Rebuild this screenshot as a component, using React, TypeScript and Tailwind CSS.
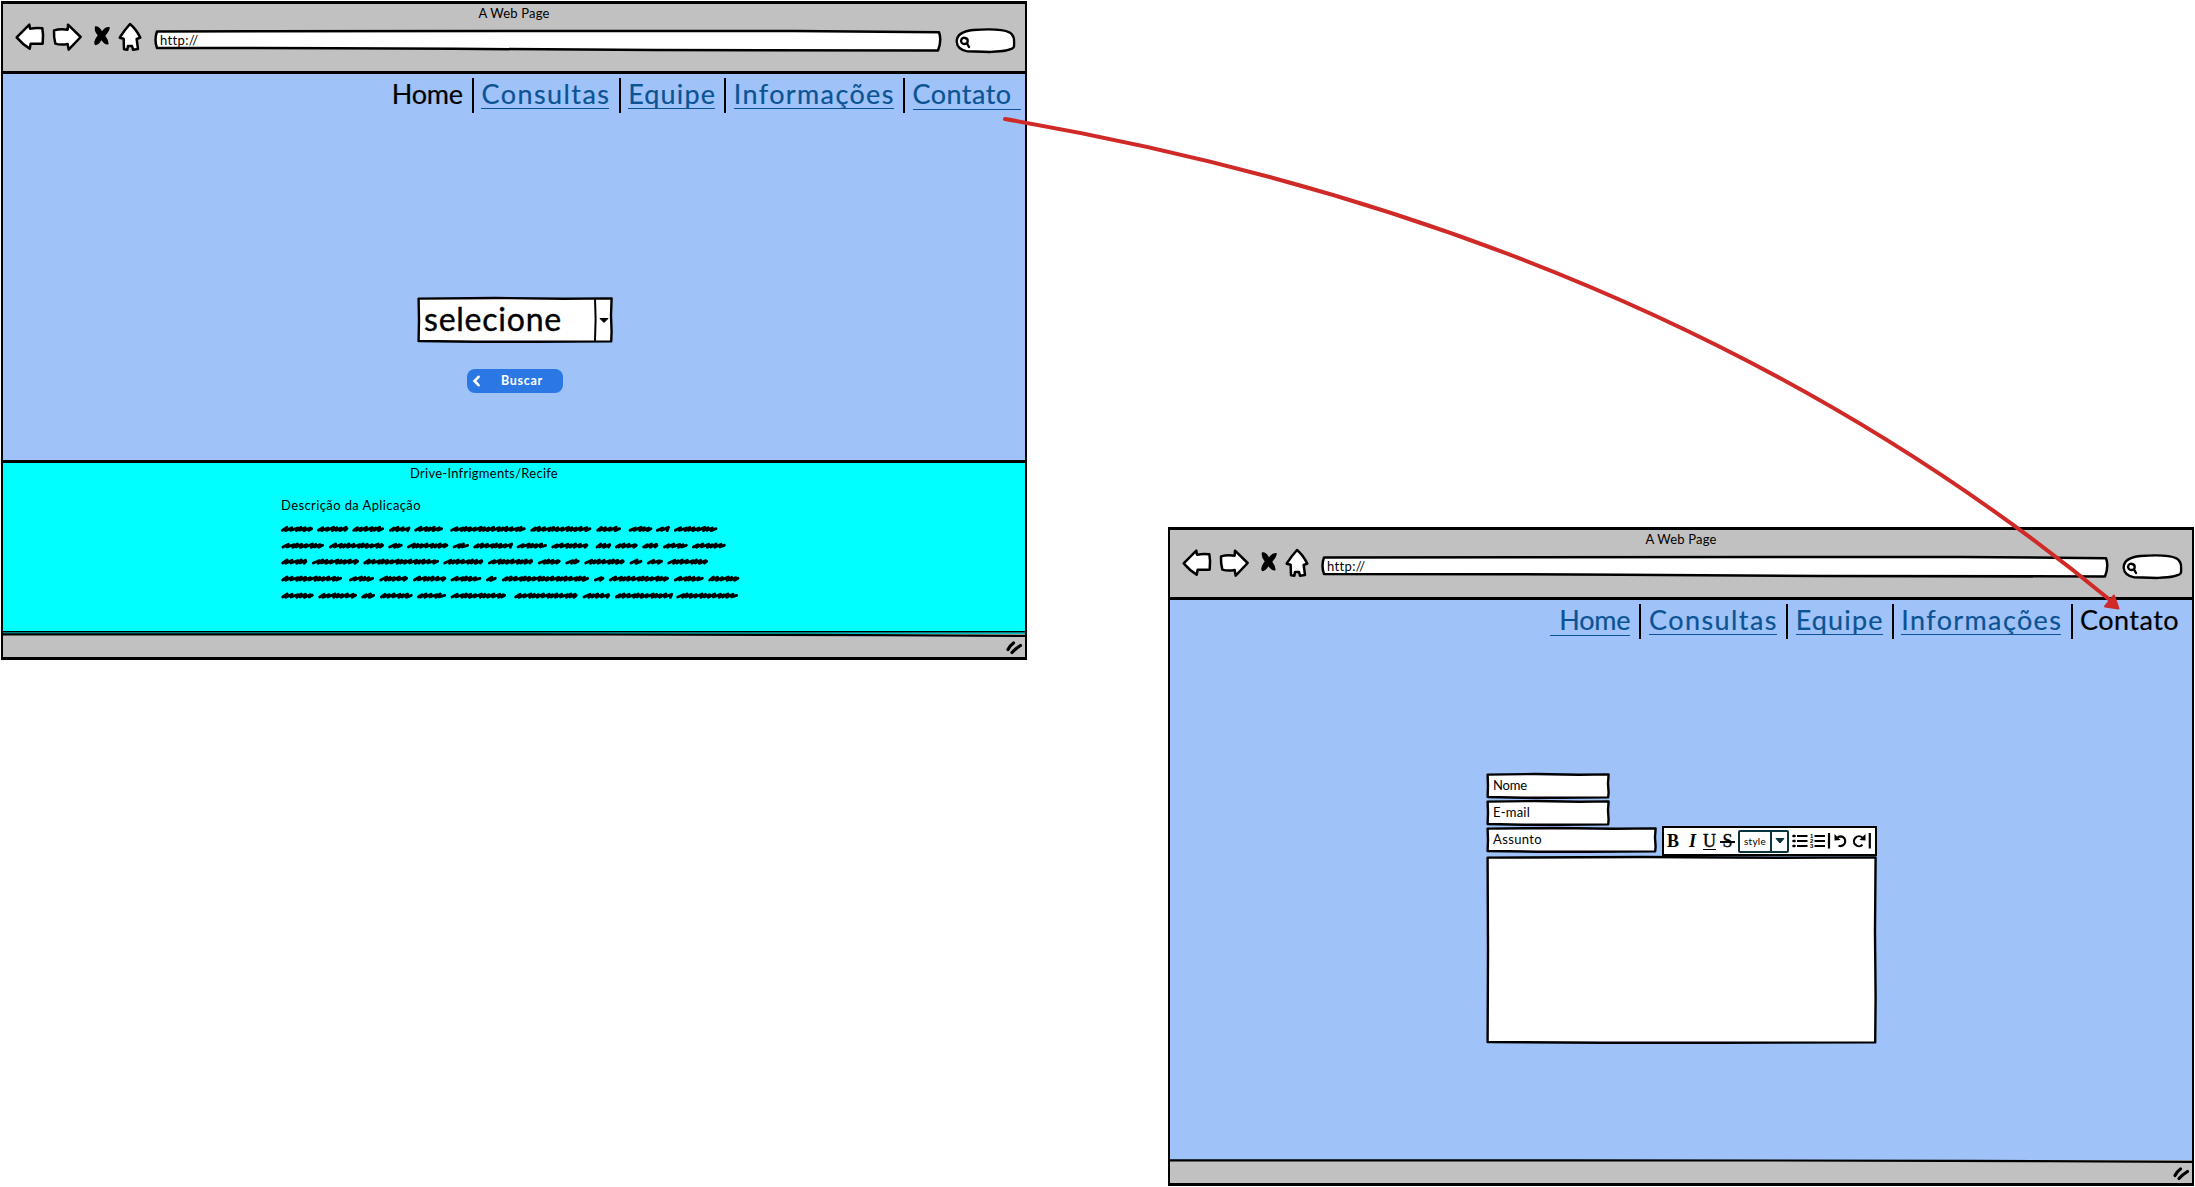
import React, { useLayoutEffect, useRef, useState } from "react";

/** Text whose letter spacing is tuned so that it takes a given width. */
function FitText({ w, className = "", children }: { w: number; className?: string; children: string }) {
  const ref = useRef<HTMLSpanElement>(null);
  const [spacing, setSpacing] = useState(0);
  useLayoutEffect(() => {
    if (ref.current) {
      const natural = ref.current.getBoundingClientRect().width;
      setSpacing((w - natural) / children.length);
    }
  }, []);
  return (
    <span ref={ref} className={`inline-block whitespace-pre ${className}`} style={{ letterSpacing: spacing }}>
      {children}
    </span>
  );
}

/** A box with a hand-drawn outline, stretched behind its content. */
function SketchBox({
  w,
  h,
  className = "",
  stroke = 2.4,
  children,
}: {
  w: number;
  h: number;
  className?: string;
  stroke?: number;
  children?: React.ReactNode;
}) {
  const d = `M1.6 1.6 L${w * 0.4} 1 L${w * 0.75} 1.8 L${w - 1.4} 1.4 L${w - 2} ${h * 0.4} L${w - 1.4} ${h * 0.75} L${w - 1.8} ${h - 1.6} L${w * 0.6} ${h - 1.2} L${w * 0.3} ${h - 1.3} L1.6 ${h - 2} L2 ${h * 0.5} Z`;
  return (
    <div className={`relative isolate shrink-0 ${className}`} style={{ width: w, height: h }}>
      <svg className="absolute inset-0 -z-10 overflow-visible" width={w} height={h}>
        <path d={d} fill="#fff" stroke="#000" strokeWidth={stroke} strokeLinejoin="round" />
      </svg>
      {children}
    </div>
  );
}

function BrowserBar() {
  return (
    <header className="h-[70px] shrink-0 border-b-[3px] border-black bg-[#c1c1c1]">
      <div className="flex h-[17px] justify-center text-[13px] leading-[18px]">
        <FitText w={71}>A Web Page</FitText>
      </div>
      <div className="flex items-start pl-[13px]">
        <svg className="mt-[2px] overflow-visible" width="28" height="27" viewBox="48 69 84 81">
          <path d="M50 112L88 74L90 86Q110 82 127 85Q131 105 128 131L92 131L89 146Q68 133 50 112Z" fill="#fff" stroke="#000" strokeWidth="7.500" strokeLinejoin="round" />
        </svg>
        <svg className="mt-[2px] ml-[9px] overflow-visible" width="28" height="28" viewBox="159 69 84 84">
          <path d="M162 91Q180 86 203 89L204 74L242 111L206 149L203 132Q183 136 166 131Q161 112 162 91Z" fill="#fff" stroke="#000" strokeWidth="7.500" strokeLinejoin="round" />
        </svg>
        <svg className="mt-[4px] ml-[12px] overflow-visible" width="17" height="21" viewBox="279 75 51 63">
          <path d="M285 79Q297 77 306 94Q315 79 329 81Q331 90 316 107Q326 120 326 132Q317 138 304 121Q297 134 286 136Q277 129 293 106Q281 92 285 79Z" fill="#000" />
        </svg>
        <svg className="mt-[2px] ml-[8px] overflow-visible" width="24" height="28" viewBox="354 69 72 84">
          <path d="M390 72Q408 87 421 113L410 117L414 147L399 149L396 138L384 138L382 149L372 148L371 116L359 113Q372 92 390 72Z" fill="#fff" stroke="#000" strokeWidth="7.500" strokeLinejoin="round" />
        </svg>
        <div className="relative isolate mt-[9px] ml-[12px] h-[21px] w-[788px] pl-[6px] text-[13px] leading-[21px]">
          <svg className="absolute inset-0 -z-10 overflow-visible" width="788" height="21">
            <path d="M3 1.4L500 1L640 1L785 2.2Q788 10 784 20.5L500 20L300 18.8L180 18.2L3 18Q0 10 3 1.4Z" fill="#fff" stroke="#000" strokeWidth="2.5" strokeLinejoin="round" />
          </svg>
          <FitText w={38}>http://</FitText>
        </div>
        <svg className="mt-[7px] ml-[13px] overflow-visible" width="61" height="25" viewBox="225 84 183 75">
          <path d="M230 125C230 101 250 93 280 90C325 87 370 88 388 97C404 106 403 120 402 140C398 152 360 154 330 156C300 154 280 155 262 154C240 150 231 140 230 125Z" fill="#fff" stroke="#000" strokeWidth="7" />
          <path d="M257 114C246 110 240 121 245 128C251 135 263 132 263 124C264 117 261 115 255 114M261 130L267 141" fill="none" stroke="#000" strokeWidth="7" strokeLinecap="round" />
        </svg>
      </div>
    </header>
  );
}

const LINKS = [
  { label: "Home", box: "w-[71px]", fit: 71 },
  { label: "Consultas", box: "w-[128px]", fit: 129 },
  { label: "Equipe", box: "w-[87px]", fit: 88 },
  { label: "Informações", box: "w-[160px]", fit: 161 },
  { label: "Contato", box: "w-[98px]", fit: 99 },
];

function Nav({ active, className }: { active: string; className: string }) {
  return (
    <nav className={`mt-[4px] flex h-[35px] shrink-0 justify-end text-[27px] leading-[32px] ${className}`}>
      {LINKS.map(({ label, box, fit }, i) => {
        const current = label === active;
        const pad = current ? "" : label === "Home" ? "pl-[9px] box-content" : label === "Contato" ? "pr-[10px] box-content" : "";
        return (
          <React.Fragment key={label}>
            {i > 0 && <span className="mr-[7.5px] ml-[9.2px] h-[35px] w-[2px] bg-black" />}
            <a
              className={`h-[31px] ${box} ${pad} ${
                current
                  ? "text-black [-webkit-text-stroke:0.2px_black]"
                  : "border-b border-[#0b5394] text-[#0b5394] [-webkit-text-stroke:0.2px_#0b5394]"
              }`}
            >
              <FitText w={fit}>{label}</FitText>
            </a>
          </React.Fragment>
        );
      })}
    </nav>
  );
}

function StatusBar({ double }: { double: boolean }) {
  return (
    <footer className="relative h-[23px] shrink-0 bg-[#c1c1c1]">
      <svg className="absolute left-0 top-0 overflow-visible" width="1022" height="4">
        {double && <path d="M0 -2.300H1022" stroke="#000" strokeWidth="1.600" />}
        {double && <path d="M0 -1H1022" stroke="#007a7a" strokeWidth="1.200" />}
        <path d="M0 -0.800L400 -0.800L800 -0.200L1022 0.800L1022 3L880 2.200L600 1.500L0 1.500Z" fill="#000" />
      </svg>
      <svg className="mr-[3px] ml-auto overflow-visible" width="18" height="22" viewBox="0 0 18 22">
        <path d="M4 15.500Q6 11.500 9.500 9M8 18.500Q11 15 16.500 11.500" fill="none" stroke="#000" strokeWidth="3.200" strokeLinecap="round" />
      </svg>
    </footer>
  );
}

function BrowserWindow({ className, double = false, children }: { className: string; double?: boolean; children: React.ReactNode }) {
  return (
    <section className={`absolute flex h-[659px] w-[1026px] flex-col border-x-2 border-y-[3px] border-black bg-[#9fc3f8] ${className}`}>
      <BrowserBar />
      <main className="flex min-h-0 flex-1 flex-col">{children}</main>
      <StatusBar double={double} />
    </section>
  );
}

/* Start and end of every scribbled word, line by line, in thirds of a pixel. */
const SCRIBBLES: { y: number; words: number[][] }[] = [
  { y: 238, words: [[65, 160], [173, 266], [279, 373], [389, 450], [465, 550], [573, 798], [813, 995], [1011, 1084], [1108, 1178], [1190, 1229], [1244, 1373]] },
  { y: 288, words: [[67, 193], [209, 373], [387, 429], [443, 566], [580, 628], [642, 757], [772, 862], [876, 986], [1009, 1054], [1067, 1134], [1149, 1196], [1211, 1284], [1298, 1398]] },
  { y: 336, words: [[66, 143], [158, 298], [312, 538], [552, 671], [686, 820], [836, 903], [918, 960], [975, 1095], [1111, 1148], [1163, 1210], [1224, 1345]] },
  { y: 387, words: [[66, 247], [269, 343], [360, 445], [461, 560], [574, 665], [680, 711], [728, 988], [1004, 1034], [1049, 1228], [1244, 1332], [1347, 1439]] },
  { y: 438, words: [[66, 162], [177, 292], [306, 346], [362, 459], [473, 559], [574, 739], [765, 954], [970, 1051], [1067, 1236], [1251, 1435]] },
];

function scribble(x0: number, x1: number, y: number) {
  let d = `M${x0 + 3} ${y + 4}`;
  let x = x0 + 3;
  let k = Math.round(x0 / 7);
  while (x < x1 - 18) {
    const step = 11 + ((k * 5) % 4) * 2.5;
    d += `L${x + step} ${y - 5 + (k % 3)}L${x + step - 4} ${y + 4 + (k % 2)}`;
    x += step - 1;
    k++;
  }
  return d + `L${x1 - 4} ${y - 1}`;
}

function HomePage() {
  return (
    <>
      <Nav active="Home" className="pr-[4.5px]" />
      <div className="mt-[184px] flex h-[163px] shrink-0 flex-col items-center pl-[2px]">
        <SketchBox w={196} h={46}>
          <FitText w={145} className="pl-[7px] text-[32px] leading-[44px] [-webkit-text-stroke:0.4px_black]">selecione</FitText>
          <svg className="absolute top-0 right-0" width="20" height="46">
            <path d="M2 1L2.600 22L2 44" fill="none" stroke="#000" strokeWidth="2" />
            <path d="M7 21.500L15 21.500L11 25.500Z" stroke="#000" strokeLinejoin="round" />
          </svg>
        </SketchBox>
        <button className="mt-[26px] flex h-[24px] w-[96px] items-center rounded-[8px] bg-[#2b78e4] pl-[5px] text-[12.5px] leading-[22px] font-bold text-white">
          <svg width="9" height="12" viewBox="0 0 9 12">
            <path d="M6.500 1.800L2.500 6L6.500 10.200" fill="none" stroke="#fff" strokeWidth="2.600" strokeLinecap="round" />
          </svg>
          <FitText w={42} className="ml-[20px]">Buscar</FitText>
        </button>
      </div>
      <div className="flex-1 border-t-[3px] border-black bg-[#00ffff] text-[13px] leading-[16px]">
        <div className="pt-[2px] pl-[407px]">
          <FitText w={148}>Drive-Infrigments/Recife</FitText>
        </div>
        <div className="pt-[16px] pl-[278px]">
          <FitText w={140}>Descrição da Aplicação</FitText>
        </div>
        <svg className="mt-[10px] ml-[278px] overflow-visible" width="460" height="80" viewBox="64 220 1380 240">
          {SCRIBBLES.map(({ y, words }) =>
            words.map(([a, b]) => (
              <path key={`${y}-${a}`} d={scribble(a, b, y)} fill="none" stroke="#000" strokeWidth="8.500" strokeLinecap="round" strokeLinejoin="round" />
            )),
          )}
        </svg>
      </div>
    </>
  );
}

/** Rich text tools: text styles, style picker, lists, undo and redo. */
function EditorToolbar() {
  return (
    <div className="ml-[5px] flex h-[30px] w-[215px] items-center border-2 border-black bg-white pl-[3px] font-['Liberation_Serif'] text-[18px] leading-[26px]">
      <span className="w-[18px] font-bold">B</span>
      <span className="w-[18px] pl-[4px] font-bold italic">I</span>
      <span className="w-[18px] underline underline-offset-2 [-webkit-text-stroke:0.4px_black]">U</span>
      <span className="relative mr-[4px] w-[13px] text-center [-webkit-text-stroke:0.4px_black]">
        S
        <span className="absolute top-[13px] left-[-1px] h-[1.5px] w-[15px] bg-black" />
      </span>
      <div className="flex h-[23px] w-[51px] items-center rounded-[2px] border-2 border-[#0c343d] pl-[4px] font-['Lato'] text-[10px] leading-[20px]">
        <FitText w={22}>style</FitText>
        <span className="ml-[4px] h-full w-[2px] bg-[#0c343d]" />
        <svg className="ml-[3px]" width="10" height="8">
          <path d="M1 1.500L9 1.500L5 6Z" fill="#0c343d" stroke="#0c343d" strokeLinejoin="round" />
        </svg>
      </div>
      <svg className="overflow-visible" width="82" height="26" viewBox="0 0 82 26">
        <g stroke="#000" strokeWidth="2.200">
          <path d="M8 8H18.500M8 13H18.500M8 18H18.500" />
          <path d="M4.500 8H5.500M4.500 13H5.500M4.500 18H5.500" strokeWidth="2.600" strokeLinecap="round" />
          <path d="M25.500 8H36M25.500 13H36M25.500 18H36" />
          <path d="M40 5V20.500M80.800 5V20.500" />
        </g>
        <g className="font-['Liberation_Sans'] text-[6px] font-bold">
          <text x="21" y="9.500">1</text>
          <text x="21" y="14.500">2</text>
          <text x="21" y="19.500">3</text>
        </g>
        <path d="M48.500 9.500Q50 8.300 52 8.300A4.900 4.900 0 1 1 49.500 17.700" fill="none" stroke="#000" strokeWidth="2.200" />
        <path d="M45.500 6L45.500 12.500L51.500 12Z" />
        <path d="M73.500 9.700A5 5 0 1 0 73.500 16.800" fill="none" stroke="#000" strokeWidth="2.200" />
        <path d="M76.500 6L76.500 12.500L70.500 12Z" />
      </svg>
    </div>
  );
}

function ContactPage() {
  return (
    <>
      <Nav active="Contato" className="pr-[14px]" />
      <div className="mt-[134px] ml-[316px] text-[13px] leading-[24px]">
        <div className="flex items-end">
          <div className="flex flex-col gap-px pb-[3px]">
            <SketchBox w={124} h={26} className="pl-[7px]">
              <FitText w={34}>Nome</FitText>
            </SketchBox>
            <SketchBox w={124} h={26} className="pl-[7px]">
              <FitText w={37}>E-mail</FitText>
            </SketchBox>
            <SketchBox w={171} h={26} className="pl-[7px]">
              <FitText w={49}>Assunto</FitText>
            </SketchBox>
          </div>
          <EditorToolbar />
        </div>
        <SketchBox w={391} h={188} />
      </div>
    </>
  );
}

export default function App() {
  return (
    <div className="relative h-[1187px] w-[2195px] overflow-hidden bg-white font-['Lato',sans-serif] text-black">
      <BrowserWindow className="top-[1px] left-[1px]" double>
        <HomePage />
      </BrowserWindow>
      <BrowserWindow className="top-[527px] left-[1168px]">
        <ContactPage />
      </BrowserWindow>
      <svg className="absolute inset-0" width="2195" height="1187">
        <path d="M1005 119Q1664 232 2110 600" fill="none" stroke="#cf2a27" strokeWidth="4" strokeLinecap="round" />
        <path d="M2105 606.500L2114 595.500L2118.500 608.500Z" fill="#cf2a27" stroke="#cf2a27" strokeWidth="2" strokeLinejoin="round" />
      </svg>
    </div>
  );
}
